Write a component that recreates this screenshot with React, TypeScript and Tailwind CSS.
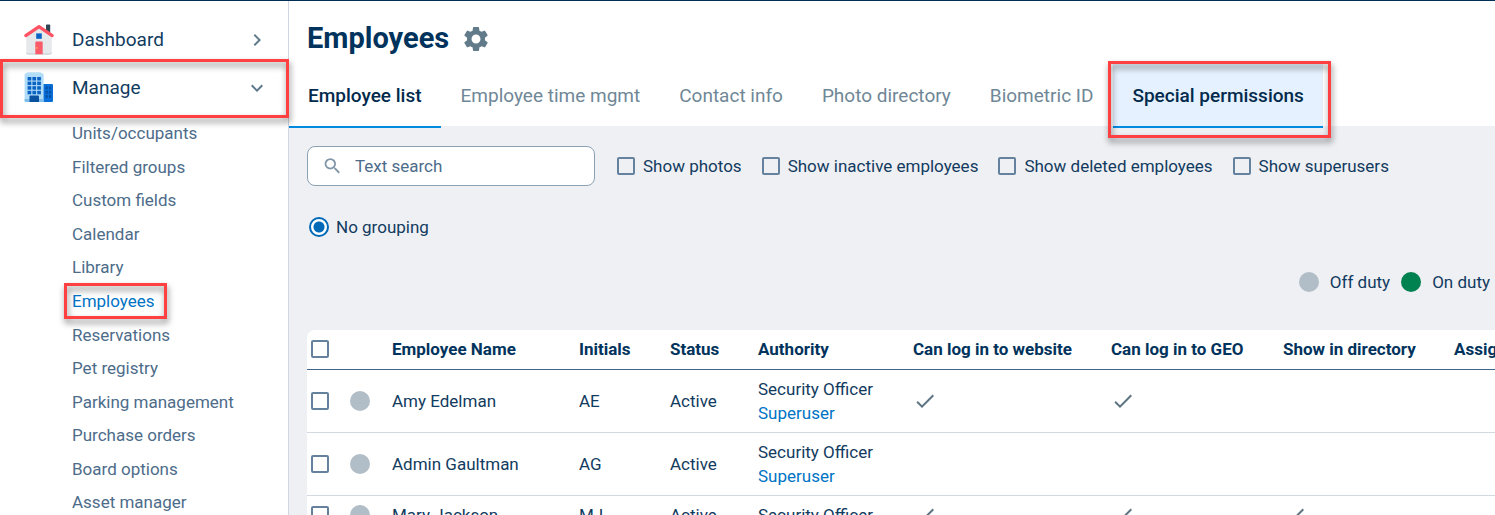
import React from 'react';
import { MdCheck, MdChevronRight, MdExpandMore, MdSearch, MdSettings } from 'react-icons/md';

const submenu = [
  'Units/occupants',
  'Filtered groups',
  'Custom fields',
  'Calendar',
  'Library',
  'Employees',
  'Reservations',
  'Pet registry',
  'Parking management',
  'Purchase orders',
  'Board options',
  'Asset manager',
];

const tabs = [
  'Employee list',
  'Employee time mgmt',
  'Contact info',
  'Photo directory',
  'Biometric ID',
  'Special permissions',
];

const filters = ['Show photos', 'Show inactive employees', 'Show deleted employees', 'Show superusers'];

const employees = [
  { name: 'Amy Edelman', initials: 'AE', superuser: true, website: true, geo: true, directory: false },
  { name: 'Admin Gaultman', initials: 'AG', superuser: true, website: false, geo: false, directory: false },
  { name: 'Mary Jackson', initials: 'MJ', superuser: false, website: true, geo: true, directory: true },
];

const checkbox =
  'block size-[18px] shrink-0 appearance-none rounded-[2px] border-2 border-[#64829d] checked:bg-[#0069b8]';

const HouseIcon: React.FC = () => (
  <svg viewBox="0 1 32 32" className="size-8" aria-hidden="true">
    <rect x="23" y="1.5" width="4.2" height="10" rx="0.7" fill="#2f4554" />
    <path d="M3.2 13 16 3.5 28.8 13v16.5a2 2 0 0 1-2 2H5.200a2 2 0 0 1-2-2z" fill="#e6e9ec" />
    <path d="M3.200 28.5v1a2 2 0 0 0 2 2h21.600a2 2 0 0 0 2-2v-1a2 2 0 0 1-2 2H5.200a2 2 0 0 1-2-2z" fill="#c3cbd6" />
    <path d="M2.8 12.6 16 3.6l13.2 9" fill="none" stroke="#ff5364" strokeWidth="3.2" strokeLinecap="round" strokeLinejoin="round" />
    <rect x="13.2" y="10.4" width="5.6" height="5.400" fill="#0a62c4" />
    <path d="M12.3 31.2V19.4a1 1 0 0 1 1-1h5.4a1 1 0 0 1 1 1v11.8z" fill="#f95b6b" />
    <circle cx="13.8" cy="25" r="0.8" fill="#ffc23c" />
  </svg>
);

const BuildingIcon: React.FC = () => (
  <svg viewBox="0 1 32 32" className="size-8" aria-hidden="true">
    <rect x="20" y="13" width="10" height="18" rx="1" fill="#0a6ed8" />
    <path d="M3.5 2.5a1 1 0 0 1 1-1h13a1 1 0 0 1 1 1z" fill="#8ecdf0" />
    <rect x="1.6" y="2.3" width="19" height="28.7" rx="1.5" fill="#b0dcf7" />
    <path d="M1.6 28h19v3h-17.500a1.500 1.500 0 0 1-1.500-1.500z" fill="#7cbdec" />
    {[6, 10.6, 15.2, 19.8].map((y) =>
      [4.6, 9.4, 14.2].map((x) => <rect key={`${x}-${y}`} x={x} y={y} width="3.7" height="3.500" fill="#0a62c4" />)
    )}
    {[15.5, 19.8, 24.1].map((y) =>
      [22.6, 26].map((x) => <rect key={`${x}-${y}`} x={x} y={y} width="2.200" height="2.800" fill="#0352a8" />)
    )}
    <path d="M6.500 31v-5.500a1 1 0 0 1 1-1h7.500a1 1 0 0 1 1 1V31z" fill="#0a519f" />
  </svg>
);

/** Red frame drawn around the element it sits in */
const Highlight: React.FC<{ className: string }> = ({ className }) => (
  <span
    className={`pointer-events-none absolute z-10 border-3 border-[#ff4040] drop-shadow-[1px_4px_3px_rgba(0,0,0,0.5)] ${className}`}
  />
);

const Sidebar: React.FC = () => (
  <nav className="w-[289px] shrink-0 border-r border-[#d0d7e2] bg-white pt-[15px]">
    <button type="button" className="flex h-12 w-full items-center pr-[19px] pl-[23px] text-[19px]">
      <HouseIcon />
      <span className="ml-[17px] flex-1 text-left">Dashboard</span>
      <MdChevronRight className="size-6 text-[#5f7a8c]" />
    </button>
    <button type="button" className="relative flex h-12 w-full items-center pr-[19px] pl-[23px] text-[19px]">
      <BuildingIcon />
      <span className="ml-[17px] flex-1 text-left">Manage</span>
      <MdExpandMore className="size-6 text-[#5f7a8c]" />
      <Highlight className="-top-[5px] -right-px -bottom-[6px] left-0" />
    </button>
    <ul className="mt-[5px] grid h-[403px] auto-rows-fr items-center pl-[72px] text-[17px] text-[#4d6c8a]">
      {submenu.map((item) => (
        <li key={item}>
          {item === 'Employees' ? (
            <a href="#employees" className="relative text-[#0073c4]">
              {item}
              <Highlight className="-top-2 -right-3 -bottom-2 -left-2" />
            </a>
          ) : (
            <a href="#">{item}</a>
          )}
        </li>
      ))}
    </ul>
  </nav>
);

const Tabs: React.FC = () => (
  <div role="tablist" className="flex gap-px">
    {tabs.map((tab, i) => {
      const current = i === 0;
      const marked = tab === 'Special permissions';
      return (
        <button
          key={tab}
          type="button"
          role="tab"
          aria-selected={current}
          className={`relative -mb-[2px] h-[66px] border-b-2 px-[19px] pt-1 text-[19px] whitespace-nowrap ${
            current
              ? 'border-[#008ae0] font-medium text-[#012a4c]'
              : marked
                ? 'border-[#008ae0] bg-[#e5f1fe] font-medium text-[#012a4c]'
                : 'border-transparent text-[#6f8796]'
          }`}
        >
          {tab}
          {marked && <Highlight className="-top-px -right-2 -bottom-3 -left-[5px]" />}
        </button>
      );
    })}
  </div>
);

const Dot: React.FC<{ on?: boolean }> = ({ on }) => (
  <span className={`block size-5 rounded-full ${on ? 'bg-[#008150]' : 'bg-[#b1bdc7]'}`} />
);

const Tick: React.FC<{ show: boolean }> = ({ show }) => (show ? <MdCheck className="size-6 text-[#5f7583]" /> : null);

const EmployeeTable: React.FC = () => (
  <div className="mt-[35px] overflow-hidden rounded-tl-lg bg-white">
    <table className="w-[1360px] min-w-full table-fixed text-left leading-6">
      <colgroup>
        <col className="w-[43px]" />
        <col className="w-[42px]" />
        <col className="w-[187px]" />
        <col className="w-[91px]" />
        <col className="w-[88px]" />
        <col className="w-[155px]" />
        <col className="w-[198px]" />
        <col className="w-[172px]" />
        <col className="w-[171px]" />
        <col />
      </colgroup>
      <thead>
        <tr className="h-[39px] border-b border-[#41678a] text-[#01335c]">
          <th className="pl-1">
            <input type="checkbox" aria-label="Select all" className={checkbox} />
          </th>
          <th />
          <th>Employee Name</th>
          <th>Initials</th>
          <th>Status</th>
          <th>Authority</th>
          <th>Can log in to website</th>
          <th>Can log in to GEO</th>
          <th>Show in directory</th>
          <th>Assigned</th>
        </tr>
      </thead>
      <tbody>
        {employees.map((employee) => (
          <tr key={employee.initials} className="border-b border-[#d3d9e1]">
            <td className="pl-1">
              <input type="checkbox" aria-label={employee.name} className={checkbox} />
            </td>
            <td>
              <Dot />
            </td>
            <td>{employee.name}</td>
            <td>{employee.initials}</td>
            <td>Active</td>
            <td className="py-[7px]">
              Security Officer
              {employee.superuser && (
                <a href="#" className="block text-[#0073c4]">
                  Superuser
                </a>
              )}
            </td>
            <td>
              <Tick show={employee.website} />
            </td>
            <td>
              <Tick show={employee.geo} />
            </td>
            <td>
              <Tick show={employee.directory} />
            </td>
            <td />
          </tr>
        ))}
      </tbody>
    </table>
  </div>
);

const App: React.FC = () => {
  return (
    <div className="flex h-screen flex-col overflow-hidden border-t border-[#002f56] bg-white font-['Roboto',sans-serif] text-[17px] text-[#123b60]">
      <div className="flex min-h-0 flex-1">
        <Sidebar />
        <main className="min-w-0 flex-1 bg-[#eff0f4]">
          <header className="bg-white pt-[14px]">
            <div className="flex h-[47px] items-center gap-3 pl-[18px]">
              <h1 className="text-[29px] font-bold text-[#01335c]">Employees</h1>
              <button type="button" aria-label="Settings">
                <MdSettings className="size-[30px] text-[#617b8b]" />
              </button>
            </div>
            <Tabs />
          </header>
          <div className="pt-5 pl-[18px]">
            <div className="flex items-center gap-[22px] whitespace-nowrap">
              <label className="flex h-10 w-72 shrink-0 items-center gap-3 rounded-lg border border-[#8ba2b5] bg-white px-[14px]">
                <MdSearch className="size-6 text-[#8095a8]" />
                <input
                  type="text"
                  aria-label="Text search"
                  placeholder="Text search"
                  className="w-full pt-[2px] outline-none placeholder:text-[#4d6c8a]"
                />
              </label>
              <div className="flex gap-5">
                {filters.map((filter) => (
                  <label key={filter} className="flex items-center gap-2">
                    <input type="checkbox" className={checkbox} />
                    <span className="pt-[2px]">{filter}</span>
                  </label>
                ))}
              </div>
            </div>
            <label className="mt-7 flex h-[26px] items-center gap-[7px] pl-[2px]">
              <input
                type="radio"
                name="grouping"
                defaultChecked
                className="size-5 appearance-none rounded-full border-2 border-[#0069b8] bg-white bg-[radial-gradient(circle,#0069b8_5px,transparent_6px)]"
              />
              <span className="pt-[2px]">No grouping</span>
            </label>
            <div className="mt-[29px] flex h-[26px] items-center justify-end gap-[11px] pr-[5px]">
              <Dot />
              <span className="pt-[2px]">Off duty</span>
              <Dot on />
              <span className="pt-[2px]">On duty</span>
            </div>
            <EmployeeTable />
          </div>
        </main>
      </div>
    </div>
  );
};

export default App;
